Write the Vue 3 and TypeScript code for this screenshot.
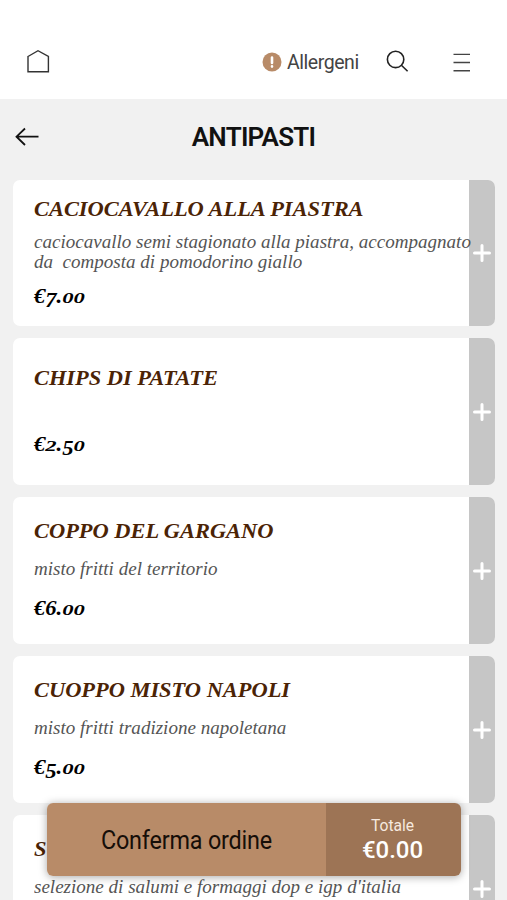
<script setup lang="ts">
interface Dish {
  name: string
  lines: string[]
  price: string
}

const dishes: Dish[] = [
  { name: 'CACIOCAVALLO ALLA PIASTRA', lines: ['caciocavallo semi stagionato alla piastra, accompagnato', 'da  composta di pomodorino giallo'], price: '€7.00' },
  { name: 'CHIPS DI PATATE', lines: [], price: '€2.50' },
  { name: 'COPPO DEL GARGANO', lines: ['misto fritti del territorio'], price: '€6.00' },
  { name: 'CUOPPO MISTO NAPOLI', lines: ['misto fritti tradizione napoletana'], price: '€5.00' },
  { name: 'S', lines: ["selezione di salumi e formaggi dop e igp d'italia"], price: '' },
]

// Old-style figures: low 0-2, descending 3-5, 7 and 9.
function figure(c: string): string {
  if ('012'.includes(c)) return 'low'
  if ('34579'.includes(c)) return 'desc'
  return 'full'
}
</script>

<template>
  <div class="page">
    <header class="bar">
      <svg class="home" width="24" height="26" viewBox="0 0 24 26"><path d="M2 7.5 12 1.7 22.4 7.5V22.7H2Z" /></svg>
      <div class="allergens">
        <svg width="20" height="20" viewBox="0 0 20 20"><circle cx="10" cy="10" r="9.5" fill="#b88b68" /><path d="M10 5.5V11M10 14.2V14.6" stroke="#fff" stroke-width="2.6" stroke-linecap="round" /></svg>
        <span class="allergens-label">Allergeni</span>
      </div>
      <svg class="search" width="24" height="24" viewBox="0 0 24 24"><circle cx="9.6" cy="9.4" r="8.2" /><path d="M15.4 15.2 21.6 21.2" /></svg>
      <svg class="menu" width="18" height="20" viewBox="0 0 18 20"><path d="M.5 2.4H17M.5 10.5H17M.5 18.7H17" /></svg>
    </header>
    <div class="heading">
      <svg class="back" width="24" height="20" viewBox="0 0 24 20"><path d="M23.5 9.7H1.5M10 1.5 1.5 9.7 10 18" /></svg>
      <h1>ANTIPASTI</h1>
    </div>
    <main class="list">
      <article v-for="dish in dishes" :key="dish.name" class="card">
        <div class="info" :class="'lines-' + dish.lines.length">
          <h2>{{ dish.name }}</h2>
          <div class="description"><p v-for="line in dish.lines" :key="line">{{ line }}</p></div>
          <div v-if="dish.price" class="price"><span v-for="(c, i) in dish.price" :key="i" :class="figure(c)">{{ c }}</span></div>
        </div>
        <button class="add" aria-label="+">
          <svg width="18" height="18" viewBox="0 0 18 18"><path d="M9 1.5V16.5M1.5 9H16.5" /></svg>
        </button>
      </article>
    </main>
    <footer class="order">
      <button class="confirm"><span>Conferma ordine</span></button>
      <div class="total">
        <span class="total-label">Totale</span>
        <span class="total-value">€0.00</span>
      </div>
    </footer>
  </div>
</template>

<style>
body { background: #f1f1f1; overflow: hidden; }
</style>

<style scoped>
* { box-sizing: border-box; }
h1, h2, p { margin: 0; }
button { border: 0; padding: 0; }
svg { display: block; fill: none; flex: none; }
.page { height: 900px; overflow: hidden; background: #f1f1f1; font-family: Roboto, "Noto Sans", sans-serif; }
.bar { height: 98.5px; padding: 25.5px 36px 0 26px; display: flex; align-items: center; background: #fff; }
.home { stroke: #333; stroke-width: 1.4; }
.allergens { margin-left: auto; display: flex; align-items: center; gap: 5px; }
.allergens-label { width: 73px; padding-top: 2px; font-size: 19.5px; line-height: 24px; letter-spacing: -.45px; color: #444; white-space: nowrap; }
.search { margin-left: 26px; stroke: #222; stroke-width: 1.6; }
.menu { margin-left: 43px; stroke: #444; stroke-width: 1.4; }
.heading { height: 81px; padding: 0 15px 4px; display: grid; grid-template-columns: 24px 1fr 24px; align-items: center; }
.back { stroke: #111; stroke-width: 1.8; }
h1 { text-align: center; font-size: 26px; font-weight: 600; line-height: 32px; letter-spacing: -.75px; color: #111; }
.list { display: flex; flex-direction: column; gap: 12px; padding: 0 12px 0 13px; }
.card { height: 146.8px; flex: none; display: flex; background: #fff; border-radius: 7px; }
.info { width: 456px; flex: none; padding-left: 21px; font-family: "Liberation Serif", serif; font-style: italic; white-space: pre; position: relative; z-index: 1; }
h2 { font-size: 21px; line-height: 24px; font-weight: 700; color: #4b2305; transform: scaleX(1.067); transform-origin: 0 50%; }
.description { font-size: 19.6px; line-height: 20.5px; color: #555; transform: scaleX(.972); transform-origin: 0 50%; }
.price { font-size: 20px; line-height: 24px; font-weight: 700; color: #000; display: flex; transform: scaleX(1.13); transform-origin: 0 50%; }
.price span { display: block; transform-origin: 50% 77%; }
.price .low { transform: scaleY(.72); }
.price .desc { transform: translateY(4px); }
.lines-2 { padding-top: 17px; }
.lines-2 .description { padding-top: 11px; }
.lines-2 .price { margin-top: 11px; }
.lines-0 { padding-top: 28px; }
.lines-0 .price { margin-top: 42px; }
.lines-1 { padding-top: 22px; }
.lines-1 .description { padding-top: 16px; }
.lines-1 .price { margin-top: 16.5px; }
.add { flex: 1; display: grid; place-items: center; padding-top: 1px; background: #c6c6c6; border-radius: 0 7px 7px 0; }
.add svg { stroke: #fff; stroke-width: 3; stroke-linecap: round; }
.order { position: absolute; left: 47px; top: 803px; z-index: 2; width: 414px; height: 73px; display: flex; border-radius: 6px; overflow: hidden; box-shadow: 0 1px 8px rgba(0, 0, 0, .35); }
.confirm { width: 279px; background: #b88b68; color: #160e08; font: 25px Roboto, sans-serif; letter-spacing: -.2px; }
.confirm span { display: inline-block; padding-top: 2px; transform: scaleX(.935); }
.total { flex: 1; padding: 10px 2px 0 0; background: #9d7455; color: #fff; display: flex; flex-direction: column; align-items: center; }
.total-label { font-size: 17px; line-height: 24px; color: #f6e9df; transform: scaleX(.92); }
.total-value { font-size: 24px; font-weight: 500; line-height: 26px; }
</style>
